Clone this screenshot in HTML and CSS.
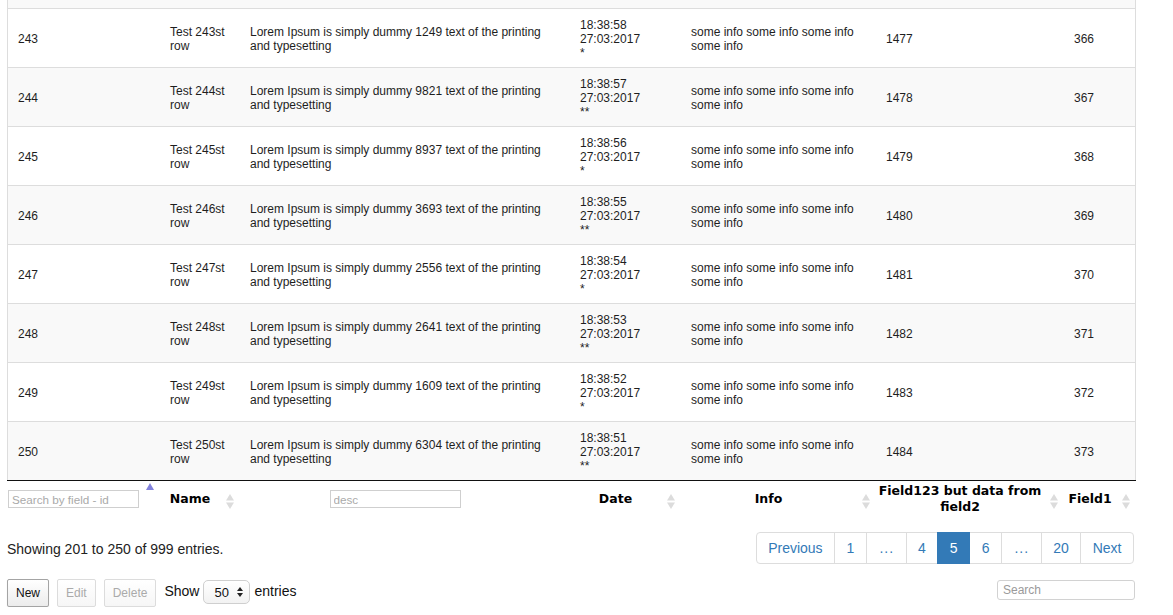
FILE: index.html
```html
<!DOCTYPE html>
<html>
<head>
<meta charset="utf-8">
<link rel="stylesheet" href="styles.css">
</head>
<body>
<div class="page">
  <table class="grid">
    <colgroup>
      <col class="c-id"><col class="c-name"><col class="c-desc"><col class="c-date"><col class="c-info"><col class="c-f123"><col class="c-f1">
    </colgroup>
    <tbody>
      <tr class="even"><td>242</td><td>Test 242st row</td><td>Lorem Ipsum is simply dummy 4410 text of the printing and typesetting</td><td>18:38:59<br>27:03:2017<br>**</td><td>some info some info some info some info</td><td>1476</td><td>365</td></tr>
      <tr><td>243</td><td>Test 243st row</td><td>Lorem Ipsum is simply dummy 1249 text of the printing and typesetting</td><td>18:38:58<br>27:03:2017<br>*</td><td>some info some info some info some info</td><td>1477</td><td>366</td></tr>
      <tr class="even"><td>244</td><td>Test 244st row</td><td>Lorem Ipsum is simply dummy 9821 text of the printing and typesetting</td><td>18:38:57<br>27:03:2017<br>**</td><td>some info some info some info some info</td><td>1478</td><td>367</td></tr>
      <tr><td>245</td><td>Test 245st row</td><td>Lorem Ipsum is simply dummy 8937 text of the printing and typesetting</td><td>18:38:56<br>27:03:2017<br>*</td><td>some info some info some info some info</td><td>1479</td><td>368</td></tr>
      <tr class="even"><td>246</td><td>Test 246st row</td><td>Lorem Ipsum is simply dummy 3693 text of the printing and typesetting</td><td>18:38:55<br>27:03:2017<br>**</td><td>some info some info some info some info</td><td>1480</td><td>369</td></tr>
      <tr><td>247</td><td>Test 247st row</td><td>Lorem Ipsum is simply dummy 2556 text of the printing and typesetting</td><td>18:38:54<br>27:03:2017<br>*</td><td>some info some info some info some info</td><td>1481</td><td>370</td></tr>
      <tr class="even"><td>248</td><td>Test 248st row</td><td>Lorem Ipsum is simply dummy 2641 text of the printing and typesetting</td><td>18:38:53<br>27:03:2017<br>**</td><td>some info some info some info some info</td><td>1482</td><td>371</td></tr>
      <tr><td>249</td><td>Test 249st row</td><td>Lorem Ipsum is simply dummy 1609 text of the printing and typesetting</td><td>18:38:52<br>27:03:2017<br>*</td><td>some info some info some info some info</td><td>1483</td><td>372</td></tr>
      <tr class="even"><td>250</td><td>Test 250st row</td><td>Lorem Ipsum is simply dummy 6304 text of the printing and typesetting</td><td>18:38:51<br>27:03:2017<br>**</td><td>some info some info some info some info</td><td>1484</td><td>373</td></tr>
    </tbody>
    <tfoot>
      <tr>
        <th><input class="col-search" type="text" placeholder="Search by field - id"><svg class="sort asc" width="8" height="7" viewBox="0 0 8 7"><polygon points="4,0 8,7 0,7" fill="#8282dc"/></svg></th>
        <th>Name<svg class="sort" width="8" height="15" viewBox="0 0 8 15"><polygon points="4,0 8,6.5 0,6.5" fill="#dcdcdc"/><polygon points="0,8.5 8,8.5 4,15" fill="#dcdcdc"/></svg></th>
        <th><input class="col-search" type="text" placeholder="desc"></th>
        <th>Date<svg class="sort" width="8" height="15" viewBox="0 0 8 15"><polygon points="4,0 8,6.5 0,6.5" fill="#dcdcdc"/><polygon points="0,8.5 8,8.5 4,15" fill="#dcdcdc"/></svg></th>
        <th>Info<svg class="sort" width="8" height="15" viewBox="0 0 8 15"><polygon points="4,0 8,6.5 0,6.5" fill="#dcdcdc"/><polygon points="0,8.5 8,8.5 4,15" fill="#dcdcdc"/></svg></th>
        <th>Field123 but data from field2<svg class="sort" width="8" height="15" viewBox="0 0 8 15"><polygon points="4,0 8,6.5 0,6.5" fill="#dcdcdc"/><polygon points="0,8.5 8,8.5 4,15" fill="#dcdcdc"/></svg></th>
        <th>Field1<svg class="sort" width="8" height="15" viewBox="0 0 8 15"><polygon points="4,0 8,6.5 0,6.5" fill="#dcdcdc"/><polygon points="0,8.5 8,8.5 4,15" fill="#dcdcdc"/></svg></th>
      </tr>
    </tfoot>
  </table>

  <div class="info-row">
    <div class="info">Showing 201 to 250 of 999 entries.</div>
    <div class="pager">
      <a class="pg first">Previous</a>
      <a class="pg">1</a>
      <a class="pg dots">...</a>
      <a class="pg">4</a>
      <a class="pg active">5</a>
      <a class="pg">6</a>
      <a class="pg dots">...</a>
      <a class="pg">20</a>
      <a class="pg last">Next</a>
    </div>
  </div>

  <div class="controls">
    <div class="left">
      <button class="btn">New</button>
      <button class="btn disabled">Edit</button>
      <button class="btn disabled">Delete</button>
      <span class="label show">Show</span>
      <span class="select">50<svg width="6" height="10" viewBox="0 0 6 10"><polygon points="3,0 6,4 0,4" fill="#222"/><polygon points="0,6 6,6 3,10" fill="#222"/></svg></span>
      <span class="label entries">entries</span>
    </div>
    <input class="search" type="text" placeholder="Search">
  </div>
</div>
</body>
</html>
```

FILE: styles.css
```css
html, body {
  margin: 0;
  padding: 0;
  background: #fff;
}

body {
  font-family: "Liberation Sans", Arial, sans-serif;
  color: #333;
  overflow: hidden;
}

.page {
  width: 1129px;
  margin: -51px 0 0 7px;
}

.grid {
  width: 1129px;
  table-layout: fixed;
  border-collapse: separate;
  border-spacing: 0;
  font-size: 12px;
  line-height: 14px;
}

.c-id { width: 153px; }
.c-name { width: 80px; }
.c-desc { width: 330px; }
.c-date { width: 111px; }
.c-info { width: 195px; }
.c-f123 { width: 188px; }
.c-f1 { width: 72px; }

.grid td {
  padding: 9px 10px 7px 10px;
  height: 42px;
  border-top: 1px solid #ddd;
  vertical-align: middle;
  text-align: left;
  color: #1e1e1e;
}

.grid td:first-child { border-left: 1px solid #ddd; }
.grid td:last-child { border-right: 1px solid #ddd; }

.grid tr.even td { background: #f9f9f9; }

.grid tfoot th {
  position: relative;
  border-top: 1px solid #111;
  padding: 2px 20px 4px 0;
  font-family: "DejaVu Sans", Verdana, sans-serif;
  font-weight: bold;
  font-size: 12.5px;
  line-height: 16px;
  color: #000;
  text-align: center;
  vertical-align: middle;
}

.col-search {
  display: block;
  box-sizing: border-box;
  width: 131px;
  height: 18px;
  margin: 0 auto;
  padding: 0 3px;
  border: 1px solid #cfcfcf;
  border-radius: 0;
  font-family: "Liberation Sans", Arial, sans-serif;
  font-size: 11.7px;
  font-weight: normal;
  color: #333;
  outline: none;
}

.col-search::placeholder { color: #aaa; }

.sort {
  position: absolute;
  right: 6px;
  top: 50%;
  margin-top: -6px;
}

.sort.asc {
  top: 2px;
  margin-top: 0;
}

.info-row {
  display: flex;
  justify-content: space-between;
  align-items: center;
  margin-top: 13px;
  height: 32px;
}

.info {
  font-size: 14px;
  line-height: 20px;
  color: #222;
  padding-top: 2px;
}

.pager {
  display: flex;
  margin-right: 2px;
}

.pg {
  display: block;
  padding: 6px 11.5px;
  font-size: 14px;
  line-height: 18px;
  height: 18px;
  color: #337ab7;
  background: #fff;
  border: 1px solid #ddd;
  margin-left: -1px;
}

.pg.dots {
  letter-spacing: 1px;
  padding-left: 12.5px;
  padding-right: 11.5px;
}

.pg.first {
  margin-left: 0;
  border-radius: 4px 0 0 4px;
}

.pg.last {
  border-radius: 0 4px 4px 0;
}

.pg.active {
  background: #337ab7;
  border-color: #337ab7;
  color: #fff;
  position: relative;
}

.controls {
  display: flex;
  justify-content: space-between;
  align-items: flex-start;
  margin-top: 15px;
}

.left {
  display: flex;
  align-items: center;
  gap: 8px;
}

.btn {
  box-sizing: border-box;
  height: 28px;
  padding: 0 8px;
  font-family: "Liberation Sans", Arial, sans-serif;
  font-size: 12px;
  color: #111;
  background: linear-gradient(#ffffff, #ececec);
  border: 1px solid #a4a4a4;
  border-radius: 2px;
  box-shadow: 0 1px 1px rgba(0,0,0,0.12);
}

.btn.disabled {
  color: #aaa;
  border-color: #dcdcdc;
  background: linear-gradient(#ffffff, #f6f6f6);
  box-shadow: none;
}

.label {
  font-size: 14px;
  color: #111;
  margin-top: -4px;
}

.label.show { margin-right: -4px; }
.label.entries { margin-left: -4px; }

.select {
  box-sizing: border-box;
  display: flex;
  align-items: center;
  justify-content: space-between;
  width: 47px;
  height: 24px;
  padding: 0 6px 0 10px;
  margin-top: -2px;
  border: 1px solid #cfcfcf;
  border-radius: 5px;
  background: linear-gradient(#ffffff, #f2f2f2);
  font-size: 13px;
  color: #111;
}

.search {
  box-sizing: border-box;
  width: 138px;
  height: 20px;
  margin-top: 1px;
  margin-right: 1px;
  padding: 0 5px;
  border: 1px solid #d2d2d2;
  border-radius: 3px;
  font-family: "Liberation Sans", Arial, sans-serif;
  font-size: 12px;
  outline: none;
}

.search::placeholder { color: #9a9a9a; }
```
